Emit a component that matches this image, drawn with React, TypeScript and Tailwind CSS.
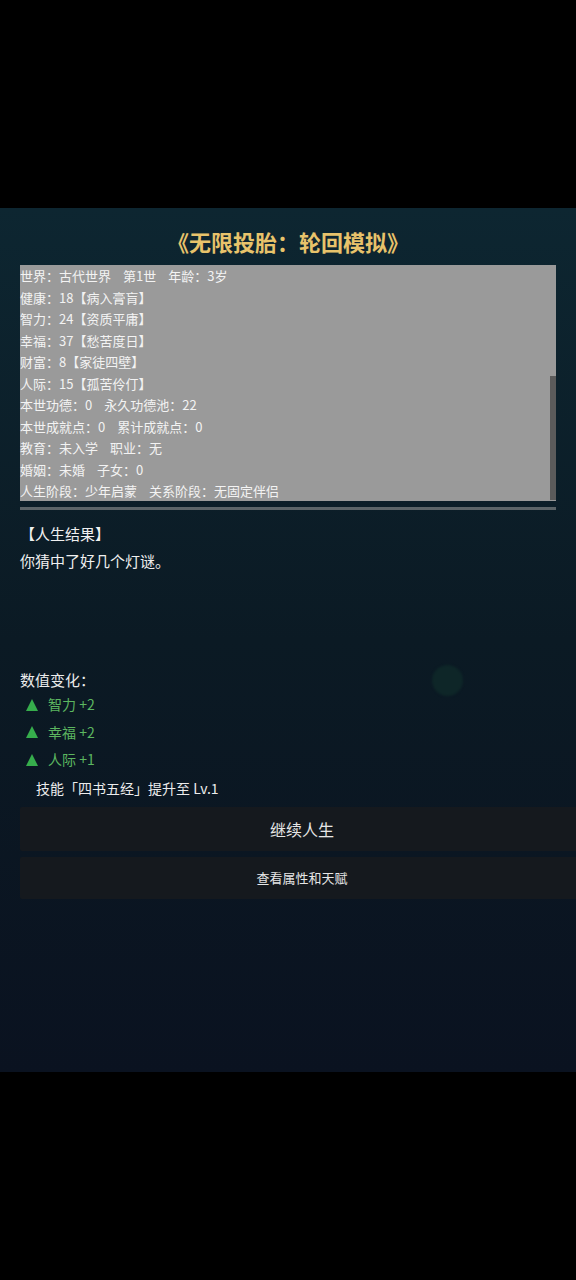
import type { ReactNode } from 'react'

const FONT = { fontFamily: '"Noto Sans CJK SC", "Noto Sans", sans-serif' }

const STATUS_LINES: string[][] = [
  ['世界：古代世界', '第1世', '年龄：3岁'],
  ['健康：18【病入膏肓】'],
  ['智力：24【资质平庸】'],
  ['幸福：37【愁苦度日】'],
  ['财富：8【家徒四壁】'],
  ['人际：15【孤苦伶仃】'],
  ['本世功德：0', '永久功德池：22'],
  ['本世成就点：0', '累计成就点：0'],
  ['教育：未入学', '职业：无'],
  ['婚姻：未婚', '子女：0'],
  ['人生阶段：少年启蒙', '关系阶段：无固定伴侣'],
]

const CHANGES = [
  { label: '智力', delta: '+2' },
  { label: '幸福', delta: '+2' },
  { label: '人际', delta: '+1' },
]

function UpArrow() {
  return (
    <svg width="12" height="12" viewBox="0 0 12 12" className="shrink-0">
      <polygon points="6,0 12,12 0,12" fill="#36ad4c" />
    </svg>
  )
}

function ActionButton({ children, className }: { children: ReactNode; className: string }) {
  return (
    <button className={`flex w-[564px] shrink-0 items-center justify-center rounded-[2px] bg-[#15191e] text-[#e6e6e6] ${className}`}>
      {children}
    </button>
  )
}

export default function App() {
  return (
    <div className="flex h-[1280px] w-[576px] flex-col overflow-hidden bg-black" style={FONT}>
      <div className="h-[208px] shrink-0" />

      <main className="relative flex h-[864px] shrink-0 flex-col overflow-hidden bg-gradient-to-b from-[#0d2631] via-[#0b1a24] to-[#0a1220] pt-[19px]">
        {/* faint decorative dot */}
        <div className="absolute left-[432px] top-[457px] h-[31px] w-[31px] rounded-full bg-[#0e2628] blur-[1px]" />

        <h1 className="h-[28px] text-center text-[22px] font-bold leading-[28px] text-[#e8c36b]">
          《无限投胎：轮回模拟》
        </h1>

        <div className="mx-5 mt-[10px] flex h-[236px] bg-[#9a9a9a]">
          <div className="flex-1 text-[13px] leading-[21.5px] text-[#f3f3f3]">
            {STATUS_LINES.map((parts, i) => (
              <div key={i} className="flex gap-3 whitespace-nowrap">
                {parts.map((p) => (
                  <span key={p}>{p}</span>
                ))}
              </div>
            ))}
          </div>
          <div className="flex w-[6px] flex-col">
            <div className="mt-[111px] h-[124px] bg-[#5b5b5b]" />
          </div>
        </div>
        <div className="mx-5 mt-[6px] h-[3px] bg-[#5c6468]" />

        <div className="mt-[10px] px-5 text-[15px] leading-[27px] text-[#f0f0f0]">
          <p>【人生结果】</p>
          <p>你猜中了好几个灯谜。</p>
        </div>

        <div className="mt-[95px] px-5">
          <p className="text-[15px] leading-[22px] text-[#ececec]">数值变化：</p>
          {CHANGES.map((c) => (
            <div key={c.label} className="flex h-[27.5px] items-center gap-[10px] pl-[6px] text-[14px] text-[#5cb660]">
              <UpArrow />
              <span>
                {c.label} {c.delta}
              </span>
            </div>
          ))}
          <p className="pl-4 text-[14px] leading-[28px] text-[#ececec]">技能「四书五经」提升至 Lv.1</p>
        </div>

        <div className="mt-[5px] flex flex-col gap-[6px] pl-5">
          <ActionButton className="h-[44px] text-[16px]">继续人生</ActionButton>
          <ActionButton className="h-[42px] text-[13px]">查看属性和天赋</ActionButton>
        </div>
      </main>

      <div className="flex-1" />
    </div>
  )
}
